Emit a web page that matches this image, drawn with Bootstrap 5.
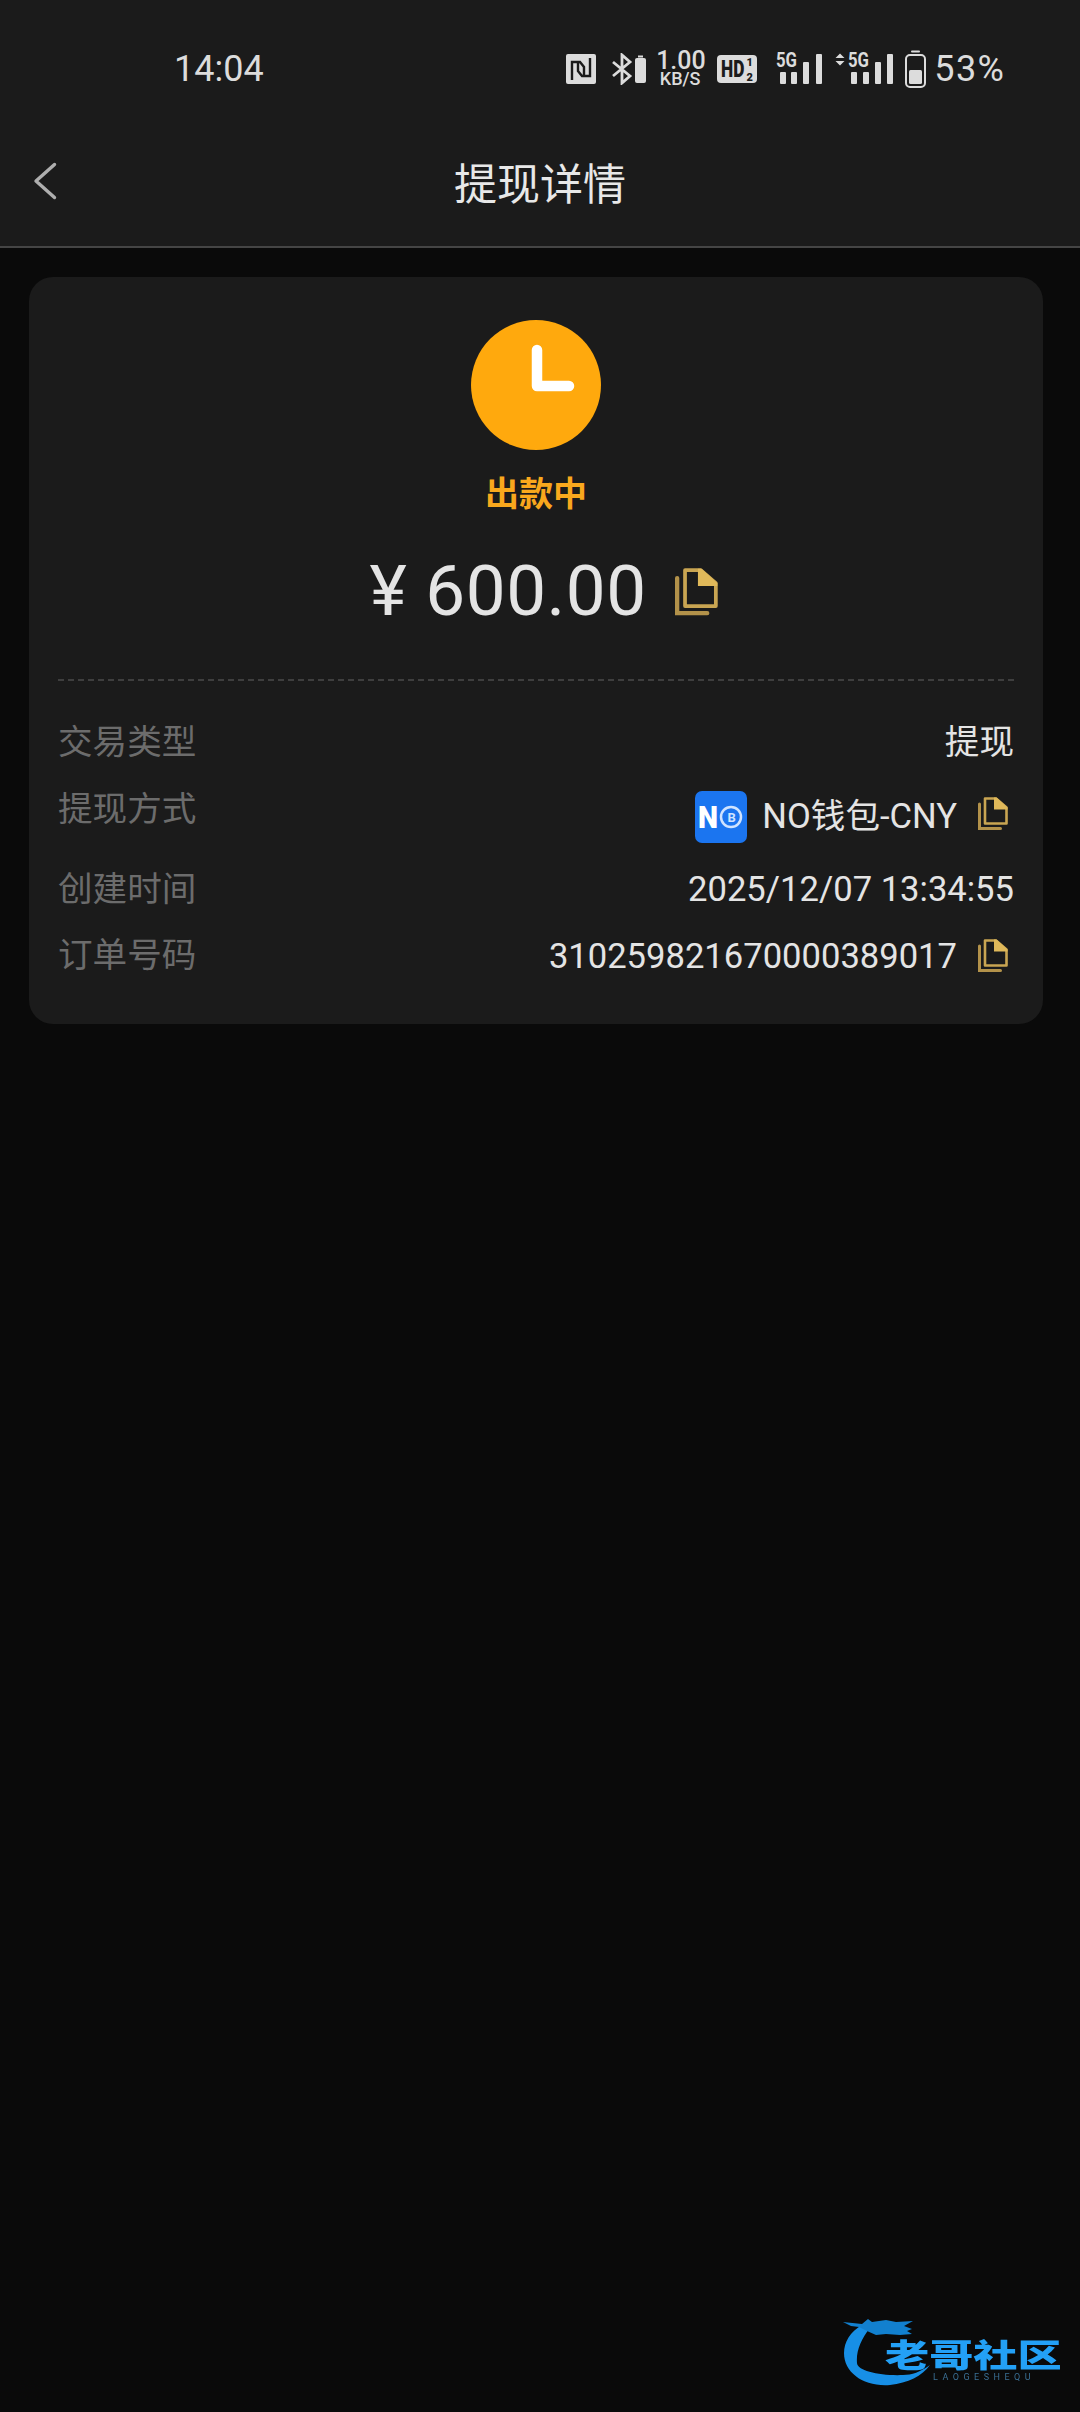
<!DOCTYPE html>
<html lang="zh-CN">
<head>
    <meta charset="UTF-8">
    <meta name="viewport" content="width=device-width, initial-scale=1.0">
    <title>提现详情</title>
    <link href="https://cdn.jsdelivr.net/npm/bootstrap@5.3.3/dist/css/bootstrap.min.css" rel="stylesheet"/>
    <style>
        body { background: #0a0a0a; font-family: Roboto, "Noto Sans CJK SC", sans-serif; color: #e2e2e2; height: 2412px; overflow: hidden; position: relative; }
        .top-head { background: #1b1b1b; height: 248px; border-bottom: 2px solid #454545; }
        .status-row { height: 130px; padding: 8px 76px 0 174px; color: #dcdcdc; }
        .status-time { font-size: 36px; line-height: 1; }
        .status-pct { font-size: 36px; line-height: 1; margin-left: 8px; letter-spacing: 1.5px; margin-right: -1.5px; }
        .status-icons svg { display: block; flex: none; }
        .speed-box { width: 48px; margin: 0 13px 0 10px; text-align: center; line-height: 1; font-weight: 500; }
        .speed-num { font-size: 25px; line-height: 20px; white-space: nowrap; }
        .speed-unit { font-size: 18px; line-height: 16px; white-space: nowrap; }
        .gap-hd { margin-right: 19px; }
        .gap-sig { margin-left: 13px; margin-right: 11px; }
        .title-row { height: 116px; padding: 0 30px; }
        .title-text { font-size: 43px; line-height: 1; position: relative; top: -3px; color: #e8e8e8; }
        .back-arrow { position: absolute; left: 33px; top: 162px; }
        .detail-box { background: #1b1b1b; border-radius: 24px; margin: 29px 37px 0 29px; padding: 43px 29px 31px; height: 747px; }
        .clock-dot { width: 130px; height: 130px; border-radius: 50%; background: #ffa90d; }
        .state-text { color: #f9a81d; font-size: 34px; font-weight: 700; line-height: 1; margin-top: 27px; }
        .amount-row { margin: 44px 0 0 15px; height: 72px; }
        .amount-text { font-size: 71px; line-height: 72px; color: #e4e4e4; letter-spacing: .5px; }
        .amount-row svg { margin-left: 28px; }
        .dash-line { border-top: 2px dashed #3f3f3f; margin: 52px 0 0; }
        .info-list { margin-top: 41px; }
        .info-row { font-size: 34.6px; line-height: 40px; }
        .info-label { color: #6c6c6c; }
        .info-val { color: #e4e4e4; }
        .row-one { height: 67px; }
        .row-two { height: 80px; }
        .row-three { height: 66px; }
        .row-four { height: 60px; }
        .copy-small { margin: 7px 6px 0 21px; flex: none; }
        .copy-low { margin-top: 3px; }
        .val-low { margin-top: 7px; }
        .val-nudge { margin-top: 1px; }
        .wallet-logo { width: 52px; height: 52px; border-radius: 7px; background: #1b75f0; margin: 2px 15px 0 0; flex: none; }
        .water-mark { position: absolute; left: 840px; top: 2314px; width: 230px; height: 76px; filter: blur(.5px); }
        .water-text { position: absolute; left: 45px; top: 26px; font-size: 32px; line-height: 1; font-weight: 900; color: #23a0f6; white-space: nowrap; transform-origin: left center; transform: scaleX(1.38); }
        .water-sub { position: absolute; left: 93px; top: 59px; font-size: 9px; line-height: 1; color: #3a6f94; letter-spacing: 4.500px; white-space: nowrap; }
    </style>
</head>
<body>

<svg width="0" height="0" class="position-absolute">
    <symbol id="copyIcon" viewBox="0 0 30 34">
        <path d="M1.500 8v24.500h21" fill="none" stroke="#b3924a" stroke-width="3" stroke-linecap="round"/>
        <path d="M7 2.500h11l10.500 9v16h-21.500z" fill="none" stroke="#c9a552" stroke-width="2.600" stroke-linejoin="round"/>
        <path d="M16 1.500h2.500l11 10v2h-13.500z" fill="#e0b95a"/>
    </symbol>
</svg>

<header class="top-head">
    <div class="status-row d-flex align-items-center justify-content-between">
        <div class="status-time">14:04</div>
        <div class="status-icons d-flex align-items-center">
            <!-- NFC -->
            <svg width="30" height="30" viewBox="0 0 30 30" class="me-3">
                <rect width="30" height="30" rx="2" fill="#dcdcdc"/>
                <path d="M6 26V8h8l4 5v9M24 4v18h-8l-4-5V8" fill="none" stroke="#1b1b1b" stroke-width="2.400"/>
            </svg>
            <!-- bluetooth + small battery -->
            <svg width="34" height="32" viewBox="0 0 34 32">
                <path d="M1 9l17 14-8 7V2l8 7L1 23" fill="none" stroke="#dcdcdc" stroke-width="2.800"/>
                <rect x="23" y="5" width="11" height="25" rx="2" fill="#dcdcdc"/>
                <rect x="26" y="2.500" width="5" height="2" fill="#dcdcdc"/>
            </svg>
            <div class="speed-box">
                <div class="speed-num">1.00</div>
                <div class="speed-unit">KB/S</div>
            </div>
            <!-- HD -->
            <svg width="40" height="36" viewBox="0 0 40 36" class="gap-hd">
                <rect y="4" width="40" height="28" rx="4" fill="#dcdcdc"/>
                <text transform="translate(4 26) scale(.72 1)" font-family="Roboto" font-size="24" font-weight="900" fill="#1b1b1b">HD</text>
                <text x="29.500" y="15" font-family="Roboto" font-size="11" font-weight="900" fill="#1b1b1b">1</text>
                <text x="29.500" y="30" font-family="Roboto" font-size="11" font-weight="900" fill="#1b1b1b">2</text>
            </svg>
            <!-- 5G signal 1 -->
            <svg width="46" height="44" viewBox="0 0 46 44">
                <text x="0" y="20" font-family="Roboto" font-size="20" font-weight="700" fill="#dcdcdc" textLength="21" lengthAdjust="spacingAndGlyphs">5G</text>
                <rect x="4" y="25" width="6" height="12" rx="1" fill="#dcdcdc"/>
                <rect x="15" y="25" width="6" height="12" rx="1" fill="#dcdcdc"/>
                <rect x="27" y="15" width="6" height="22" rx="1" fill="#dcdcdc"/>
                <rect x="40" y="7" width="6" height="30" rx="1" fill="#dcdcdc"/>
            </svg>
            <!-- 5G signal 2 -->
            <svg width="59" height="44" viewBox="0 0 59 44" class="gap-sig">
                <path d="M0.500 11l4.500-4.500 4.500 4.500zM0.500 14h9l-4.500 4.500z" fill="#dcdcdc"/>
                <text x="13" y="20" font-family="Roboto" font-size="20" font-weight="700" fill="#dcdcdc" textLength="21" lengthAdjust="spacingAndGlyphs">5G</text>
                <rect x="16" y="25" width="6" height="12" rx="1" fill="#dcdcdc"/>
                <rect x="28" y="25" width="6" height="12" rx="1" fill="#dcdcdc"/>
                <rect x="40" y="15" width="6" height="22" rx="1" fill="#dcdcdc"/>
                <rect x="52" y="7" width="6" height="30" rx="1" fill="#dcdcdc"/>
            </svg>
            <!-- battery -->
            <svg width="21" height="38" viewBox="0 0 21 38">
                <rect x="6" y="0.500" width="9" height="2" rx="1" fill="#dcdcdc"/>
                <rect x="1" y="5" width="19" height="32" rx="4" fill="none" stroke="#dcdcdc" stroke-width="2"/>
                <rect x="4" y="20" width="13" height="14" rx="1.500" fill="#dcdcdc"/>
            </svg>
            <div class="status-pct">53%</div>
        </div>
    </div>
    <svg class="back-arrow" width="24" height="38" viewBox="0 0 24 38">
        <path d="M21.500 2.500L3 19l18.500 16.500" fill="none" stroke="#aeaeae" stroke-width="3.400" stroke-linecap="round" stroke-linejoin="round"/>
    </svg>
    <div class="title-row d-flex align-items-center justify-content-center">
        <div class="title-text">提现详情</div>
    </div>
</header>

<main class="detail-box">
    <div class="d-flex flex-column align-items-center">
        <div class="clock-dot">
            <svg width="130" height="130" viewBox="0 0 130 130">
                <path d="M66 30v36h32" fill="none" stroke="#fff" stroke-width="10.500" stroke-linecap="round" stroke-linejoin="round"/>
            </svg>
        </div>
        <div class="state-text">出款中</div>
        <div class="amount-row d-flex align-items-center">
            <span class="amount-text">¥ 600.00</span>
            <svg width="43" height="50"><use href="#copyIcon"/></svg>
        </div>
    </div>
    <div class="dash-line"></div>
    <div class="info-list">
        <div class="info-row row-one d-flex justify-content-between">
            <span class="info-label">交易类型</span>
            <span class="info-val">提现</span>
        </div>
        <div class="info-row row-two d-flex justify-content-between">
            <span class="info-label">提现方式</span>
            <div class="d-flex align-items-start">
                <div class="wallet-logo d-flex align-items-center justify-content-center">
                    <svg width="46" height="40" viewBox="0 0 46 40">
                        <text x="0" y="31" font-family="Roboto" font-size="31" font-weight="900" fill="#fff" textLength="20" lengthAdjust="spacingAndGlyphs">N</text>
                        <circle cx="33" cy="20" r="10" fill="none" stroke="#cfe3ff" stroke-width="2.500"/>
                        <text x="29.500" y="25" font-family="Roboto" font-size="13" font-weight="700" fill="#cfe3ff">B</text>
                    </svg>
                </div>
                <span class="info-val val-low">NO钱包-CNY</span>
                <svg class="copy-small" width="30" height="34"><use href="#copyIcon"/></svg>
            </div>
        </div>
        <div class="info-row row-three d-flex justify-content-between">
            <span class="info-label">创建时间</span>
            <span class="info-val">2025/12/07 13:34:55</span>
        </div>
        <div class="info-row row-four d-flex justify-content-between">
            <span class="info-label">订单号码</span>
            <div class="d-flex align-items-start">
                <span class="info-val val-nudge">310259821670000389017</span>
                <svg class="copy-small copy-low" width="30" height="34"><use href="#copyIcon"/></svg>
            </div>
        </div>
    </div>
</main>

<div class="water-mark">
    <svg width="100" height="76" viewBox="0 0 100 76" class="position-absolute top-0 start-0">
        <path d="M22 11C10 18 4 28 4 39c0 20 20 34 46 32 18-2 32-9 40-20-10 7-18 10-27 10-22 1-46-4-46-12-1-12 4-24 13-35z" fill="#178fe6"/>
        <path d="M3 8l19 2 6-5 4 3 14-2 10 2 17-1-9 5 8 3-5 2 5 3-12 1-14-1-10 1-9-4-8-4-8-1z" fill="#1280cf"/>
    </svg>
    <span class="water-text">老哥社区</span>
    <span class="water-sub">LAOGESHEQU</span>
</div>

</body>
</html>
